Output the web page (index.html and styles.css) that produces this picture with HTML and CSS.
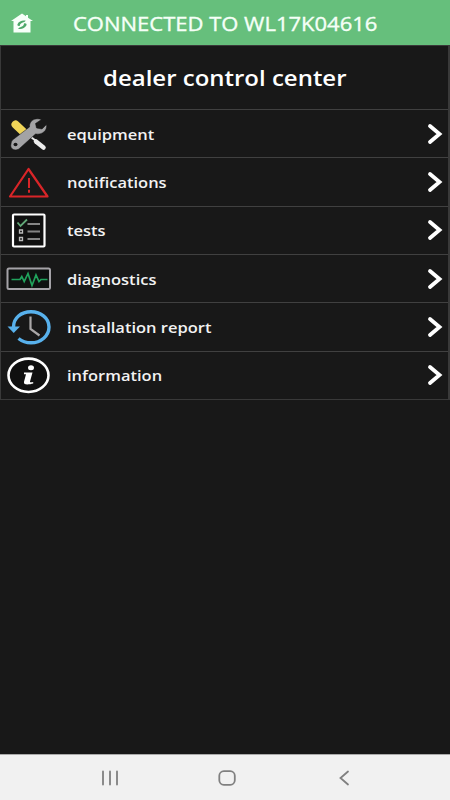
FILE: index.html
```
<!DOCTYPE html>
<html lang="en">
<head>
<meta charset="utf-8">
<title>dealer control center</title>
<link rel="stylesheet" href="styles.css">
</head>
<body>
<div class="app">
  <header class="topbar">
    <svg class="home" width="24" height="22" viewBox="0 0 24 22"><path fill="#f7fff9" d="M12 1.500l4 2.800V3h2v2.700L23 9h-2.500v11.500H3.500V9H1z"/><path d="M15.800 8.800c-3-.8-7 .4-8.300 3.400-.5 1.500.8 2 2.300 1.500 0-2.200 2.500-3.200 4.500-3.700zM8 16.700c3.200.8 7-.4 8.500-3.400.5-1.500-.8-2.300-2.500-1.800 0 2.500-2.500 3.400-4.500 3.900z" fill="#4da869"/></svg>
    <span class="status">CONNECTED TO WL17K04616</span>
  </header>
  <main class="menu">
    <h1 class="title"><span>dealer control center</span></h1>
    <a class="row"><svg class="icon" viewBox="0 0 60 48">
      <path d="M15.500 14.500l8.500 8" stroke="#f0d558" stroke-width="8" stroke-linecap="round"/>
      <path d="M31 27l5 4" stroke="#e8e8e8" stroke-width="2"/><path d="M36 31.500l7.500 6" stroke="#ececec" stroke-width="4.500" stroke-linecap="round"/>
      <path fill="#a3a3a5" stroke="#111" stroke-width=".5" d="M12.500 30L29.500 17c-.5-6 5.500-10 12-7.500l-6 4 1 4.500 5.500 1 4.500-4.500c1 6-4 10.500-11 9.500L20 38c-4 4-10.500 1.500-9-4 .2-1.600.6-3 1.500-4z"/><ellipse cx="15.500" cy="34.500" rx="2" ry="1.700" fill="#181818"/></svg>
      <span class="label">equipment</span><svg class="chevron" viewBox="0 0 18 22"><path d="M4 3l9.500 8L4 19"/></svg></a>
    <a class="row"><svg class="icon" viewBox="0 0 60 48">
      <path d="M28.500 11L47.500 38.500H10z" fill="none" stroke="#d92528" stroke-width="2.200" stroke-linejoin="round"/><path d="M29 20v10M29 31.800v3" stroke="#d92528" stroke-width="2"/></svg>
      <span class="label">notifications</span><svg class="chevron" viewBox="0 0 18 22"><path d="M4 3l9.500 8L4 19"/></svg></a>
    <a class="row"><svg class="icon" viewBox="0 0 60 48">
      <rect x="13" y="8.500" width="31.500" height="32" rx="1" fill="#101010" stroke="#fff" stroke-width="2.200"/><path d="M17.500 16.500l3 3.500L27 13.500" fill="none" stroke="#62a878" stroke-width="1.800"/><path d="M27.500 18H40M27.500 25.500H40M27.500 33H40" stroke="#858585" stroke-width="2"/><path d="M19.500 24h3v3h-3zM19.500 31.500h3v3h-3z" fill="none" stroke="#bbb" stroke-width="1.300"/></svg>
      <span class="label">tests</span><svg class="chevron" viewBox="0 0 18 22"><path d="M4 3l9.500 8L4 19"/></svg></a>
    <a class="row"><svg class="icon" viewBox="0 0 60 48">
      <rect x="7.500" y="13.500" width="42.500" height="20.500" rx="1.500" fill="#0e1110" stroke="#a5a3a8" stroke-width="2"/><path d="M11.500 24.500H20l1.800-3 2.400 5L28 18.500l4 12 4-10.500 3 6.500 2-2h6.500" fill="none" stroke="#20a35c" stroke-width="1.700"/></svg>
      <span class="label">diagnostics</span><svg class="chevron" viewBox="0 0 18 22"><path d="M4 3l9.500 8L4 19"/></svg></a>
    <a class="row"><svg class="icon" viewBox="0 0 60 48">
      <path d="M13.500 24C13.500 15 21 8.800 31 8.800S49 15.200 49 24 41 39.800 31 39.800c-5 0-9-1.500-12.500-4.300" fill="none" stroke="#58b1ec" stroke-width="3.400"/><path fill="#58b1ec" d="M7.500 23.500h12.500l-6.300 6.500z"/><path d="M30.500 13.500V26l9 6.500" fill="none" stroke="#aaa7a8" stroke-width="2.200"/></svg>
      <span class="label">installation report</span><svg class="chevron" viewBox="0 0 18 22"><path d="M4 3l9.500 8L4 19"/></svg></a>
    <a class="row"><svg class="icon" viewBox="0 0 60 48">
      <ellipse cx="28.500" cy="24.300" rx="20" ry="16.700" fill="#101010" stroke="#fff" stroke-width="2.600"/><ellipse cx="31" cy="16.800" rx="3" ry="2.500" fill="#fff"/><path d="M24 21.500h8.500l-2.500 9c-.2 1 1 .9 3.200.6v1.500c-4 1-10 2-9.200-1.800l2-7.600H24z" fill="#fff"/></svg>
      <span class="label">information</span><svg class="chevron" viewBox="0 0 18 22"><path d="M4 3l9.500 8L4 19"/></svg></a>
  </main>
  <footer class="navbar">
    <svg viewBox="0 0 20 18"><path d="M3 2.500v13M10 2.500v13M17 2.500v13"/></svg>
    <svg viewBox="0 0 20 18"><rect x="2.300" y="2.200" width="15.500" height="13.600" rx="4.500"/></svg>
    <svg viewBox="0 0 20 18"><path d="M14 2.500L6.500 9l7.500 6.500"/></svg>
  </footer>
</div>
</body>
</html>
```
FILE: styles.css
```
body {
  margin: 0;
  background: #181818;
  font-family: "Open Sans", "Noto Sans", sans-serif;
}
.app {
  height: 800px;
  display: flex;
  flex-direction: column;
}
.topbar {
  height: 45px;
  flex: none;
  display: flex;
  align-items: center;
  background: #66bf7c;
}
.home {
  margin-left: 10px;
}
.status {
  margin-left: 39px;
  padding-top: 2px;
  font-size: 19.5px;
  line-height: 43px;
  color: #f5fff7;
  -webkit-text-stroke: 0.35px #f5fff7;
  white-space: nowrap;
  transform: scaleX(1.128);
  transform-origin: left;
}
.menu {
  box-sizing: border-box;
  height: 355px;
  border: 1px solid #393939;
  border-right-width: 2px;
  display: flex;
  flex-direction: column;
}
.title {
  box-sizing: border-box;
  margin: 0;
  height: 63px;
  flex: none;
  line-height: 61px;
  font-size: 21px;
  font-weight: 600;
  color: #fff;
  white-space: nowrap;
  padding: 2px 0 0 102px;
}
.title span {
  display: inline-block;
  transform: scaleX(1.142);
  transform-origin: left;
}
.row {
  flex: 1;
  min-height: 0;
  display: flex;
  align-items: center;
  border-top: 1px solid #404040;
}
.icon {
  width: 60px;
  height: 48px;
  margin-left: -1px;
  fill: none;
}
.label {
  margin-left: 7px;
  padding-top: 1px;
  font-size: 14.5px;
  font-weight: 600;
  color: #f2f2f2;
  white-space: nowrap;
  transform: scaleX(1.137);
  transform-origin: left;
}
.chevron {
  width: 18px;
  height: 22px;
  margin-left: auto;
  margin-right: 4px;
  fill: none;
  stroke: #fff;
  stroke-width: 3.8;
  stroke-linecap: round;
}
.navbar {
  box-sizing: border-box;
  height: 46px;
  margin-top: auto;
  display: flex;
  align-items: center;
  justify-content: space-between;
  padding: 0 96px 0 100px;
  background: #f1f1f1;
  border-top: 1px solid #aaa;
}
.navbar svg {
  width: 20px;
  height: 18px;
  fill: none;
  stroke: #808080;
  stroke-width: 1.8;
  stroke-linecap: round;
}
```
